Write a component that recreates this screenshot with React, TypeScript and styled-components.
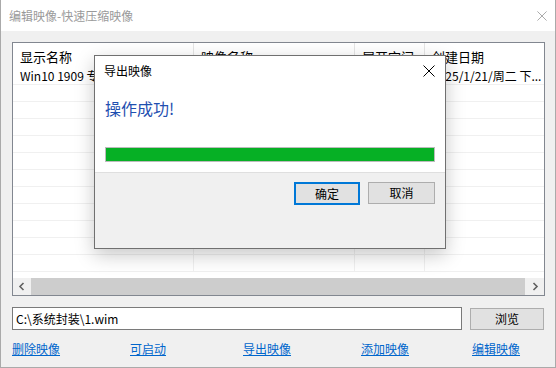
import React from "react";
import styled, { createGlobalStyle } from "styled-components";

const GlobalStyle = createGlobalStyle`
  html, body {
    margin: 0;
    padding: 0;
    background: #ffffff;
  }
  body {
    font-family: "Noto Sans CJK SC", "Noto Sans", sans-serif;
    font-size: 12px;
    color: #000;
  }
  * {
    box-sizing: border-box;
  }
`;

const Window = styled.div`
  position: relative;
  width: 556px;
  height: 368px;
  border: 1px solid #aaaaaa;
  border-top: none;
  background: #f0f0f0;
  display: flex;
  flex-direction: column;
  overflow: hidden;
`;

const TitleBar = styled.div`
  height: 31px;
  background: #ffffff;
  display: flex;
  align-items: center;
  justify-content: space-between;
  padding: 0 8px 0 8px;
  color: #9a9a9a;
  font-size: 12px;
  line-height: 16px;
`;

const CloseGlyph = styled.svg`
  display: block;
`;

const Body = styled.div`
  flex: 1;
  padding: 11px 10px 0 11px;
  display: flex;
  flex-direction: column;
`;

const ListView = styled.div`
  height: 254px;
  border: 1px solid #828790;
  background: #ffffff;
  display: flex;
  flex-direction: column;
  overflow: hidden;
`;

const HeaderRow = styled.div`
  display: flex;
  height: 25px;
  flex-shrink: 0;
`;

const HeaderCell = styled.div<{ $w: number }>`
  width: ${(p) => p.$w}px;
  flex-shrink: 0;
  padding: 4px 0 0 7px;
  font-size: 13px;
  line-height: 20px;
  border-right: 1px solid #e5e5e5;
  white-space: nowrap;
  overflow: hidden;
`;

const Row = styled.div`
  display: flex;
  height: 17px;
  flex-shrink: 0;
  border-bottom: 1px solid #f0f0f0;
`;

const Cell = styled.div<{ $w: number }>`
  width: ${(p) => p.$w}px;
  flex-shrink: 0;
  padding-left: 7px;
  font-size: 12px;
  line-height: 16px;
  border-right: 1px solid #f0f0f0;
  white-space: nowrap;
  overflow: hidden;
`;

const ScrollBar = styled.div`
  margin-top: auto;
  height: 17px;
  display: flex;
  flex-shrink: 0;
  background: #f0f0f0;
`;

const ScrollArrow = styled.div<{ $w: number }>`
  width: ${(p) => p.$w}px;
  display: flex;
  align-items: center;
  justify-content: center;
  background: #f0f0f0;
`;

const ScrollThumb = styled.div`
  flex: 1;
  background: #cdcdcd;
`;

const PathRow = styled.div`
  display: flex;
  align-items: center;
  gap: 8px;
  margin-top: 11px;
  padding-right: 1px;
`;

const PathInput = styled.div`
  width: 450px;
  height: 23px;
  border: 1px solid #7a7a7a;
  background: #ffffff;
  padding-left: 3px;
  font-size: 12px;
  line-height: 21px;
`;

const Button = styled.div<{ $primary?: boolean; $w: number }>`
  width: ${(p) => p.$w}px;
  height: ${(p) => (p.$primary ? 23 : 22)}px;
  display: flex;
  align-items: center;
  justify-content: center;
  background: #e1e1e1;
  border: ${(p) => (p.$primary ? "2px solid #0078d7" : "1px solid #adadad")};
  font-size: 12px;
  line-height: 16px;
`;

const LinkRow = styled.div`
  display: grid;
  grid-template-columns: 118px 113px 118px 111px auto;
  margin-top: 10px;
`;

const Link = styled.span`
  color: #0066cc;
  text-decoration: underline;
  font-size: 12px;
  line-height: 16px;
`;

const Dialog = styled.div`
  position: absolute;
  left: 93px;
  top: 55px;
  width: 352px;
  height: 194px;
  border: 1px solid #707070;
  background: #ffffff;
  box-shadow: 0 6px 18px rgba(0, 0, 0, 0.22);
  display: flex;
  flex-direction: column;
`;

const DialogHeader = styled.div`
  height: 32px;
  display: flex;
  align-items: center;
  justify-content: space-between;
  padding: 0 10px 2px 9px;
  font-size: 12px;
  line-height: 16px;
`;

const DialogContent = styled.div`
  flex: 1;
  display: flex;
  flex-direction: column;
  padding: 10px;
`;

const Message = styled.div`
  color: #1f4fb0;
  font-size: 16px;
  line-height: 20px;
`;

const Progress = styled.div`
  margin-top: auto;
  height: 15px;
  border: 1px solid #bcbcbc;
  background: #e6e6e6;
`;

const ProgressFill = styled.div`
  height: 100%;
  background: #06b025;
`;

const DialogFooter = styled.div`
  height: 76px;
  border-top: 1px solid #dfdfdf;
  background: #f0f0f0;
  display: flex;
  justify-content: flex-end;
  align-items: flex-start;
  gap: 8px;
  padding: 9px 10px 0 0;
`;

const columns = [181, 161, 70, 160];

const CloseIcon = ({ color, size }: { color: string; size: number }) => (
  <CloseGlyph viewBox="0 0 12 12" width={size} height={size}>
    <path d="M0.5 0.5 L11.5 11.5 M11.5 0.5 L0.5 11.5" stroke={color} strokeWidth="1" fill="none" />
  </CloseGlyph>
);

const App = () => {
  const emptyRows = Array.from({ length: 11 });
  const progress = 100;

  return (
    <>
      <GlobalStyle />
      <Window>
        <TitleBar>
          <span>编辑映像-快速压缩映像</span>
          <CloseIcon color="#9a9a9a" size={10} />
        </TitleBar>
        <Body>
          <ListView>
            <HeaderRow>
              <HeaderCell $w={columns[0]}>显示名称</HeaderCell>
              <HeaderCell $w={columns[1]}>映像名称</HeaderCell>
              <HeaderCell $w={columns[2]}>展开空间</HeaderCell>
              <HeaderCell $w={columns[3]}>创建日期</HeaderCell>
            </HeaderRow>
            <Row>
              <Cell $w={columns[0]}>Win10 1909 专业版</Cell>
              <Cell $w={columns[1]}>Windows 10 Pro</Cell>
              <Cell $w={columns[2]}>14.53 GB</Cell>
              <Cell $w={columns[3]}>2025/1/21/周二 下...</Cell>
            </Row>
            {emptyRows.map((_, i) => (
              <Row key={i}>
                {columns.map((w, j) => (
                  <Cell key={j} $w={w} />
                ))}
              </Row>
            ))}
            <ScrollBar>
              <ScrollArrow $w={18}>
                <svg width="8" height="9" viewBox="0 0 8 9">
                  <path d="M5.5 1 L2 4.5 L5.5 8" stroke="#606060" strokeWidth="1.6" fill="none" />
                </svg>
              </ScrollArrow>
              <ScrollThumb />
              <ScrollArrow $w={19}>
                <svg width="8" height="9" viewBox="0 0 8 9">
                  <path d="M2.5 1 L6 4.5 L2.5 8" stroke="#606060" strokeWidth="1.6" fill="none" />
                </svg>
              </ScrollArrow>
            </ScrollBar>
          </ListView>
          <PathRow>
            <PathInput>C:\系统封装\1.wim</PathInput>
            <Button $w={74}>浏览</Button>
          </PathRow>
          <LinkRow>
            <span><Link>删除映像</Link></span>
            <span><Link>可启动</Link></span>
            <span><Link>导出映像</Link></span>
            <span><Link>添加映像</Link></span>
            <span><Link>编辑映像</Link></span>
          </LinkRow>
        </Body>

        <Dialog>
          <DialogHeader>
            <span>导出映像</span>
            <CloseIcon color="#000000" size={12} />
          </DialogHeader>
          <DialogContent>
            <Message>操作成功!</Message>
            <Progress>
              <ProgressFill style={{ width: `${progress}%` }} />
            </Progress>
          </DialogContent>
          <DialogFooter>
            <Button $primary $w={66}>确定</Button>
            <Button $w={67}>取消</Button>
          </DialogFooter>
        </Dialog>
      </Window>
    </>
  );
};

export default App;
